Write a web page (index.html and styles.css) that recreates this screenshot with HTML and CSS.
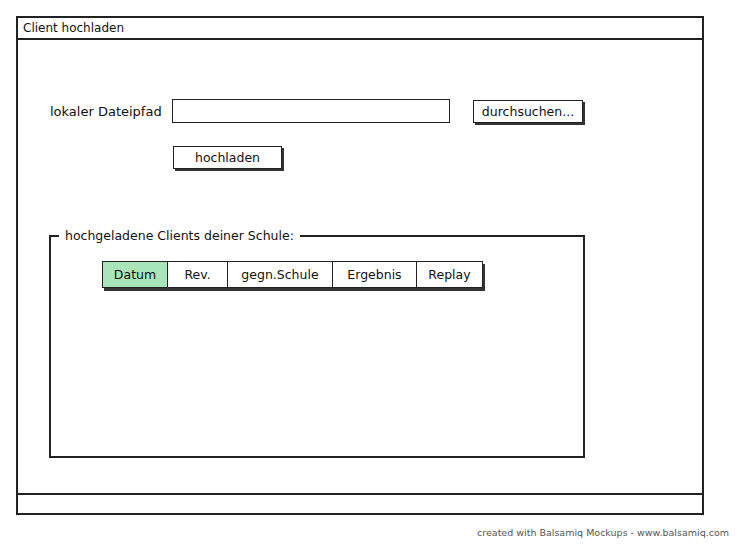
FILE: index.html
```html
<!DOCTYPE html>
<html lang="de">
  <head>
    <meta charset="UTF-8" />
    <title>Client hochladen</title>
    <link rel="stylesheet" href="styles.css">
  </head>
  <body>
    <div class="window">
      <div class="titlebar">Client hochladen</div>
      <div class="content">
        <div class="pathRow">
          <span class="label">lokaler Dateipfad</span>
          <div class="input"></div>
          <div class="btn browse">durchsuchen...</div>
        </div>
        <div class="uploadRow">
          <div class="btn upload">hochladen</div>
        </div>
        <fieldset class="group">
          <legend>hochgeladene Clients deiner Schule:</legend>
          <div class="tabs">
            <div class="tab active col1">Datum</div>
            <div class="tab col2">Rev.</div>
            <div class="tab col3">gegn.Schule</div>
            <div class="tab col4">Ergebnis</div>
            <div class="tab col5">Replay</div>
          </div>
        </fieldset>
      </div>
      <div class="statusbar"></div>
    </div>
    <p class="credit">created with Balsamiq Mockups - www.balsamiq.com</p>
  </body>
</html>
```
FILE: styles.css
```css
body {
  margin: 0;
  background-color: white;
  font-family: "DejaVu Sans", sans-serif;
  font-size: 12.5px;
  color: #111;
}
.window {
  width: 688px;
  margin: 16px 0 0 16px;
}
.titlebar {
  box-sizing: border-box;
  height: 24px;
  border: 2px solid #222;
  padding: 3px 0 0 5px;
  font-size: 12px;
}
.content {
  box-sizing: border-box;
  height: 453px;
  border-left: 2px solid #222;
  border-right: 2px solid #222;
  padding: 59px 0 0 31px;
}
.pathRow {
  display: flex;
  align-items: center;
  height: 24px;
}
.label {
  width: 122px;
  padding-left: 1px;
  font-size: 13px;
}
.input {
  box-sizing: border-box;
  width: 278px;
  height: 24px;
  border: 1.5px solid #222;
}
.btn {
  box-sizing: border-box;
  height: 23px;
  border: 1.5px solid #222;
  box-shadow: 2px 2px 0 #333;
  display: flex;
  align-items: center;
  justify-content: center;
}
.browse {
  width: 110px;
  margin-left: 23px;
}
.uploadRow {
  margin: 23px 0 0 124px;
}
.upload {
  width: 109px;
}
.group {
  box-sizing: border-box;
  width: 536px;
  height: 230px;
  margin: 59px 0 0 0;
  border: 2px solid #222;
  padding: 18px 0 0 8px;
}
.group legend {
  padding: 0 6px;
  margin: 0;
}
.tabs {
  display: flex;
  height: 27px;
  width: 381px;
  margin-left: 43px;
  box-shadow: 2px 3px 0 #333;
}
.tab {
  box-sizing: border-box;
  height: 27px;
  border: 1.5px solid #222;
  border-left-width: 0;
  display: flex;
  align-items: center;
  justify-content: center;
}
.tab:first-child {
  border-left-width: 1.5px;
}
.active {
  background-color: #a8e5b8;
}
.col1 { width: 66px; }
.col2 { width: 60px; }
.col3 { width: 105px; }
.col4 { width: 84px; }
.col5 { width: 66px; }
.statusbar {
  box-sizing: border-box;
  height: 22px;
  border: 2px solid #222;
}
.credit {
  margin: 12px 7px 0 0;
  text-align: right;
  font-size: 9.5px;
  color: #555;
}
```
